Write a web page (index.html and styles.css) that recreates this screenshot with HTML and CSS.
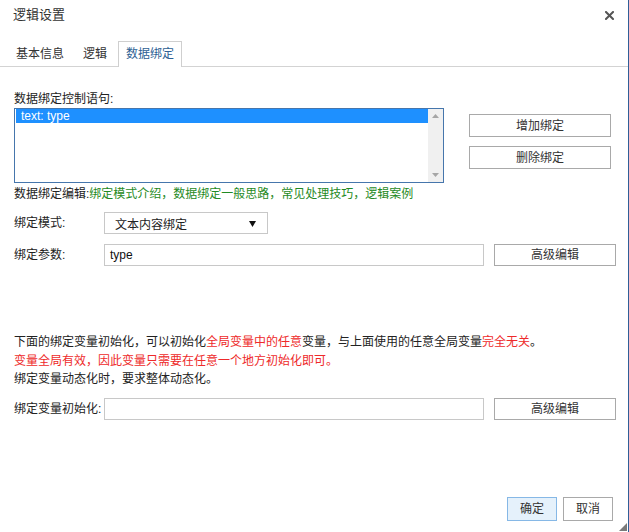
FILE: index.html
```html
<!DOCTYPE html>
<html lang="zh">
<head>
<meta charset="utf-8">
<title>逻辑设置</title>
<link rel="stylesheet" href="styles.css">
</head>
<body>
<div class="dialog">
  <div class="titlebar">
    <span class="title">逻辑设置</span>
    <span class="close">
      <svg width="9" height="9" viewBox="0 0 9 9"><path d="M1 1 L8 8 M8 1 L1 8" stroke="#555" stroke-width="2" stroke-linecap="square"/></svg>
    </span>
  </div>
  <div class="tabs">
    <div class="tab">基本信息</div>
    <div class="tab">逻辑</div>
    <div class="tab active">数据绑定</div>
  </div>
  <div class="content">
    <div class="section-top">
      <div class="left-col">
        <div class="label-line">数据绑定控制语句:</div>
        <div class="listbox">
          <div class="list-items">
            <div class="item selected">text: type</div>
          </div>
          <div class="scrollbar">
            <svg class="arrow" width="7" height="4" viewBox="0 0 7 4"><path d="M0 4 L3.5 0 L7 4 Z" fill="#a6a6a6"/></svg>
            <svg class="arrow" width="7" height="4" viewBox="0 0 7 4"><path d="M0 0 L3.5 4 L7 0 Z" fill="#a6a6a6"/></svg>
          </div>
        </div>
      </div>
      <div class="right-col">
        <button class="btn wide">增加绑定</button>
        <button class="btn wide">删除绑定</button>
      </div>
    </div>
    <div class="links">数据绑定编辑:<span class="green">绑定模式介绍，数据绑定一般思路，常见处理技巧，逻辑案例</span></div>
    <div class="row mode-row">
      <span class="row-label">绑定模式:</span>
      <div class="select"><span>文本内容绑定</span><svg width="7" height="7" viewBox="0 0 7 7"><path d="M0 1 L7 1 L3.5 7 Z" fill="#111"/></svg></div>
    </div>
    <div class="row param-row">
      <span class="row-label">绑定参数:</span>
      <div class="input">type</div>
      <button class="btn adv">高级编辑</button>
    </div>
    <div class="notes">
      <div>下面的绑定变量初始化，可以初始化<span class="red">全局变量中的任意</span>变量，与上面使用的任意全局变量<span class="red">完全无关</span>。</div>
      <div class="red">变量全局有效，因此变量只需要在任意一个地方初始化即可。</div>
      <div>绑定变量动态化时，要求整体动态化。</div>
    </div>
    <div class="row init-row">
      <span class="row-label">绑定变量初始化:</span>
      <div class="input"></div>
      <button class="btn adv">高级编辑</button>
    </div>
  </div>
  <div class="footer">
    <button class="btn small ok">确定</button>
    <button class="btn small">取消</button>
  </div>
  <div class="grip"></div>
</div>
</body>
</html>
```

FILE: styles.css
```css
html, body {
  margin: 0;
  padding: 0;
  background: #fff;
}
body {
  font-family: "Liberation Sans", "Noto Sans CJK SC", sans-serif;
  font-size: 12px;
  color: #222;
}
.dialog {
  width: 629px;
  height: 532px;
  box-sizing: border-box;
  border-right: 1px solid #2f5f98;
  display: flex;
  flex-direction: column;
  position: relative;
  overflow: hidden;
}
.titlebar {
  height: 30px;
  display: flex;
  align-items: center;
  justify-content: space-between;
  padding: 0 14px 0 13px;
}
.title {
  font-size: 13px;
  line-height: 16px;
  color: #333;
}
.close {
  display: flex;
  width: 9px;
  height: 9px;
}
.tabs {
  margin-top: 11px;
  height: 26px;
  box-sizing: border-box;
  display: flex;
  padding-left: 8px;
  border-bottom: 1px solid #d3d3d3;
}
.tab {
  height: 26px;
  box-sizing: border-box;
  padding: 0 7px;
  margin-right: 3px;
  line-height: 24px;
  color: #333;
  border: 1px solid transparent;
  border-bottom: none;
}
.tab.active {
  border-color: #cfcfcf;
  background: #fff;
  color: #2e5f94;
}
.content {
  padding: 23px 0 0 14px;
  display: flex;
  flex-direction: column;
}
.section-top {
  display: flex;
}
.left-col {
  width: 430px;
  display: flex;
  flex-direction: column;
}
.label-line {
  line-height: 18px;
  height: 18px;
}
.listbox {
  height: 75px;
  box-sizing: border-box;
  border: 1px solid #4676ac;
  display: flex;
}
.list-items {
  flex: 1;
  padding: 0 0 0 1px;
}
.item {
  height: 14px;
  line-height: 14px;
  padding-left: 5px;
  color: #000;
}
.item.selected {
  background: #1e90ff;
  color: #fff;
}
.scrollbar {
  width: 15px;
  background: #f0f0f0;
  display: flex;
  flex-direction: column;
  align-items: center;
  justify-content: space-between;
  padding: 5px 0 5px;
  box-sizing: border-box;
}
.arrow {
  display: block;
}
.right-col {
  margin-left: 25px;
  padding-top: 24px;
  display: flex;
  flex-direction: column;
  gap: 9px;
}
.btn {
  font-family: "Liberation Sans", "Noto Sans CJK SC", sans-serif;
  font-size: 12px;
  color: #333;
  background: #fff;
  border: 1px solid #a9a9a9;
  padding: 0;
  margin: 0;
  line-height: 20px;
}
.btn.wide {
  width: 142px;
  height: 23px;
}
.links {
  margin-top: 2px;
  line-height: 18px;
}
.green {
  color: #1f8a24;
}
.red {
  color: #ee2a2a;
}
.row {
  display: flex;
  align-items: center;
}
.row-label {
  width: 90px;
  flex: none;
  line-height: 18px;
}
.mode-row {
  margin-top: 9px;
}
.param-row {
  margin-top: 10px;
}
.select {
  width: 164px;
  height: 22px;
  box-sizing: border-box;
  border: 1px solid #c8c8c8;
  display: flex;
  align-items: center;
  justify-content: space-between;
  padding: 0 11px 0 10px;
}
.input {
  width: 380px;
  height: 22px;
  box-sizing: border-box;
  border: 1px solid #c8c8c8;
  padding-left: 5px;
  line-height: 20px;
  color: #111;
}
.btn.adv {
  width: 122px;
  height: 22px;
  margin-left: 10px;
}
.notes {
  margin-top: 67px;
  line-height: 18.5px;
}
.init-row {
  margin-top: 9px;
}
.footer {
  margin-top: auto;
  display: flex;
  justify-content: flex-end;
  gap: 6px;
  padding: 0 15px 11px 0;
}
.btn.small {
  width: 50px;
  height: 24px;
}
.btn.ok {
  background: #e5f1fb;
  border-color: #86b8e6;
}
.grip {
  position: absolute;
  right: 1px;
  bottom: 1px;
  width: 0;
  height: 0;
  border-left: 8px solid transparent;
  border-bottom: 8px solid #7a7a7a;
}
```
